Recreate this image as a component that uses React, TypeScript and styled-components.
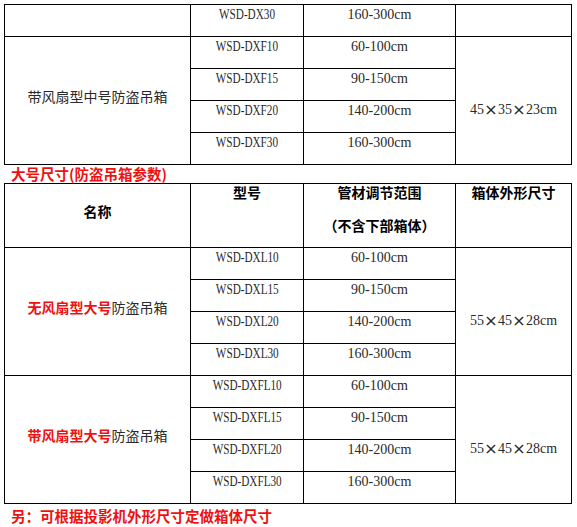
import React from "react";
import styled, { createGlobalStyle } from "styled-components";

const GlobalStyle = createGlobalStyle`
  html, body {
    margin: 0;
    padding: 0;
    background: #fff;
  }
  body {
    padding: 4px 0 0 4px;
    font-family: "Noto Sans CJK SC", sans-serif;
    color: #2b2b2b;
  }
`;

const Grid = styled.div<{ $rows: string }>`
  display: grid;
  grid-template-columns: 186px 113px 152px 116px;
  grid-template-rows: ${(p) => p.$rows};
  width: max-content;
  border-top: 1px solid #000;
  border-left: 1px solid #000;
`;

const Cell = styled.div<{ $col: number; $span?: number }>`
  grid-column: ${(p) => p.$col};
  grid-row: span ${(p) => p.$span ?? 1};
  border-right: 1px solid #000;
  border-bottom: 1px solid #000;
  display: flex;
  justify-content: center;
  min-width: 0;
  white-space: nowrap;
`;

const NameCell = styled(Cell)`
  align-items: center;
  padding-bottom: 10px;
  font-size: 14px;
  line-height: 18px;
`;

const Red = styled.span`
  color: #ee1111;
  font-weight: 700;
`;

const TextCell = styled(Cell)`
  align-items: flex-start;
  font-family: "Liberation Serif", serif;
  font-size: 14px;
  line-height: 20px;
  color: #2a2a2a;
`;

/* model codes are narrow in the original, squeeze them a bit */
const Code = styled.span`
  display: inline-block;
  transform: scaleX(0.8);
`;

const SizeCell = styled(Cell)`
  align-items: center;
  padding-top: 18px;
  font-family: "Liberation Serif", serif;
  font-size: 14px;
  line-height: 20px;
  color: #2a2a2a;
`;

const Times = styled.span`
  display: inline-block;
  width: 14px;
  text-align: center;
  font-family: "DejaVu Sans", sans-serif;
  font-weight: 400;
  font-size: 16px;
  line-height: 20px;
  vertical-align: top;
`;

const HeadCell = styled(Cell)<{ $mid?: boolean }>`
  flex-direction: column;
  align-items: center;
  justify-content: ${(p) => (p.$mid ? "center" : "flex-start")};
  padding-bottom: ${(p) => (p.$mid ? "10px" : "0")};
  font-size: 14px;
  font-weight: 700;
  line-height: 16px;
  color: #000;
`;

const HeadLine = styled.div<{ $gap?: number }>`
  margin-top: ${(p) => p.$gap ?? 0}px;
`;

const Caption = styled.div<{ $size: number; $height: number }>`
  padding-left: 7px;
  font-size: ${(p) => p.$size}px;
  line-height: ${(p) => p.$height}px;
  font-weight: 700;
  color: #ee1111;
  white-space: nowrap;
`;

const Size = ({ a, b, c }: { a: string; b: string; c: string }) => (
  <span>
    {a}
    <Times>×</Times>
    {b}
    <Times>×</Times>
    {c}cm
  </span>
);

type Group = {
  name: React.ReactNode;
  models: string[];
  size: [string, string, string];
};

const ranges = ["60-100cm", "90-150cm", "140-200cm", "160-300cm"];

const Model = ({ code }: { code: string }) => (
  <TextCell $col={2}>
    <Code>{code}</Code>
  </TextCell>
);

const GroupRows = ({ g }: { g: Group }) => (
  <>
    <NameCell $col={1} $span={4}>
      <span>{g.name}</span>
    </NameCell>
    {g.models.map((m, i) => (
      <React.Fragment key={m}>
        <Model code={m} />
        <TextCell $col={3}>{ranges[i]}</TextCell>
        {i === 0 && (
          <SizeCell $col={4} $span={4}>
            <Size a={g.size[0]} b={g.size[1]} c={g.size[2]} />
          </SizeCell>
        )}
      </React.Fragment>
    ))}
  </>
);

const large: Group[] = [
  {
    name: (
      <>
        <Red>无风扇型大号</Red>防盗吊箱
      </>
    ),
    models: ["WSD-DXL10", "WSD-DXL15", "WSD-DXL20", "WSD-DXL30"],
    size: ["55", "45", "28"],
  },
  {
    name: (
      <>
        <Red>带风扇型大号</Red>防盗吊箱
      </>
    ),
    models: ["WSD-DXFL10", "WSD-DXFL15", "WSD-DXFL20", "WSD-DXFL30"],
    size: ["55", "45", "28"],
  },
];

export default function App() {
  return (
    <>
      <GlobalStyle />
      <Grid $rows="repeat(5, 32px)">
        <NameCell $col={1} />
        <Model code="WSD-DX30" />
        <TextCell $col={3}>160-300cm</TextCell>
        <SizeCell $col={4} />
        <GroupRows
          g={{
            name: "带风扇型中号防盗吊箱",
            models: ["WSD-DXF10", "WSD-DXF15", "WSD-DXF20", "WSD-DXF30"],
            size: ["45", "35", "23"],
          }}
        />
      </Grid>
      <Caption $size={14.5} $height={18}>
        大号尺寸(防盗吊箱参数)
      </Caption>
      <Grid $rows="64px repeat(8, 32px)">
        <HeadCell $col={1} $mid>
          名称
        </HeadCell>
        <HeadCell $col={2}>
          <HeadLine>型号</HeadLine>
        </HeadCell>
        <HeadCell $col={3}>
          <HeadLine>管材调节范围</HeadLine>
          <HeadLine $gap={17}>（不含下部箱体）</HeadLine>
        </HeadCell>
        <HeadCell $col={4}>
          <HeadLine>箱体外形尺寸</HeadLine>
        </HeadCell>
        {large.map((g, i) => (
          <GroupRows key={i} g={g} />
        ))}
      </Grid>
      <Caption $size={14.5} $height={24}>
        另：可根据投影机外形尺寸定做箱体尺寸
      </Caption>
    </>
  );
}
